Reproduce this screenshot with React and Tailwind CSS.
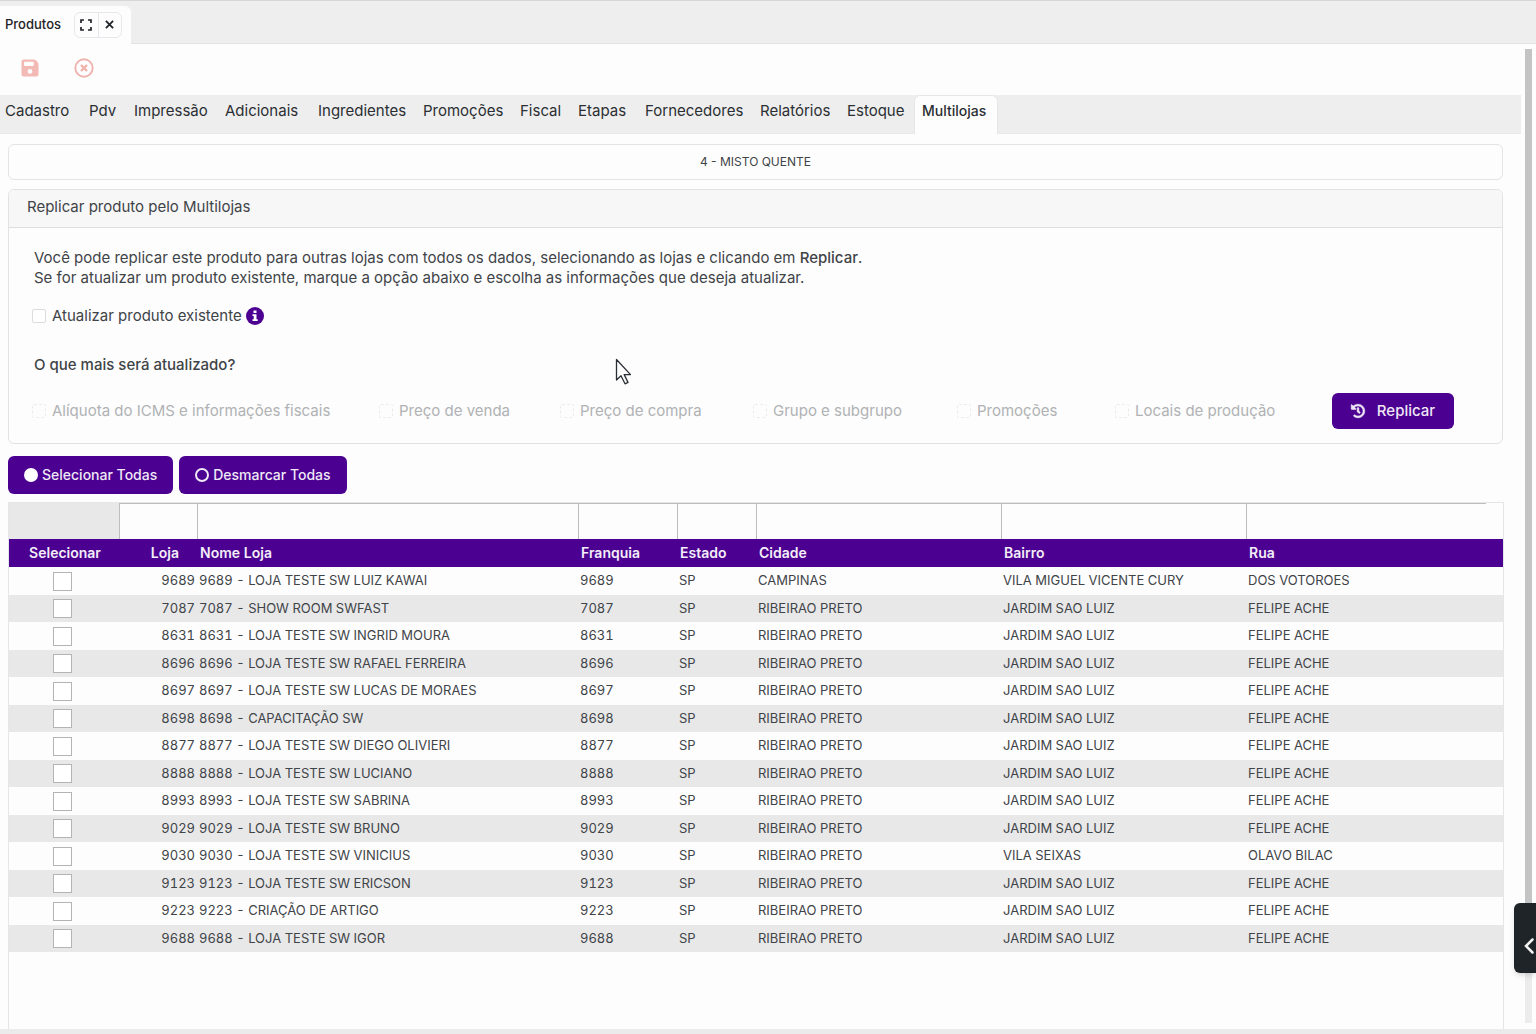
import { FaHistory } from "react-icons/fa";

const tabs = [
  "Cadastro", "Pdv", "Impressão", "Adicionais", "Ingredientes", "Promoções",
  "Fiscal", "Etapas", "Fornecedores", "Relatórios", "Estoque", "Multilojas",
];

const updateOptions = [
  "Alíquota do ICMS e informações fiscais",
  "Preço de venda",
  "Preço de compra",
  "Grupo e subgrupo",
  "Promoções",
  "Locais de produção",
];

const columns = ["Nome Loja", "Franquia", "Estado", "Cidade", "Bairro", "Rua"];

const RP = ["RIBEIRAO PRETO", "JARDIM SAO LUIZ", "FELIPE ACHE"];

const stores = [
  ["9689", "LOJA TESTE SW LUIZ KAWAI", "CAMPINAS", "VILA MIGUEL VICENTE CURY", "DOS VOTOROES"],
  ["7087", "SHOW ROOM SWFAST", ...RP],
  ["8631", "LOJA TESTE SW INGRID MOURA", ...RP],
  ["8696", "LOJA TESTE SW RAFAEL FERREIRA", ...RP],
  ["8697", "LOJA TESTE SW LUCAS DE MORAES", ...RP],
  ["8698", "CAPACITAÇÃO SW", ...RP],
  ["8877", "LOJA TESTE SW DIEGO OLIVIERI", ...RP],
  ["8888", "LOJA TESTE SW LUCIANO", ...RP],
  ["8993", "LOJA TESTE SW SABRINA", ...RP],
  ["9029", "LOJA TESTE SW BRUNO", ...RP],
  ["9030", "LOJA TESTE SW VINICIUS", "RIBEIRAO PRETO", "VILA SEIXAS", "OLAVO BILAC"],
  ["9123", "LOJA TESTE SW ERICSON", ...RP],
  ["9223", "CRIAÇÃO DE ARTIGO", ...RP],
  ["9688", "LOJA TESTE SW IGOR", ...RP],
];

function WindowBar() {
  return (
    <header className="flex h-11 items-end border-t border-[#d6d6d6] bg-[#eeeeee]">
      <div className="flex h-full w-full items-end border-b border-[#e4e4e4]">
        <div className="-mb-px flex h-[38px] w-[131px] items-center justify-between rounded-tr-md bg-[#fdfdfd] pr-[9px] pb-px pl-[5px]">
          <span className="text-[13px] font-medium text-[#1f2226]">Produtos</span>
          <div className="flex h-[26px] w-12 rounded-md border border-[#e6e8eb]">
            <button aria-label="Expandir" className="flex flex-1 items-center justify-center border-r border-[#e6e8eb]">
              <svg viewBox="0 0 12 12" className="size-3" fill="none" stroke="#1f2226" strokeWidth="1.700">
                <path d="M1 4V1h3M8 1h3v3M11 8v3H8M4 11H1V8" />
              </svg>
            </button>
            <button aria-label="Fechar" className="flex flex-1 items-center justify-center">
              <svg viewBox="0 0 10 10" className="size-[9px]" fill="none" stroke="#1f2226" strokeWidth="2">
                <path d="M1 1l8 8M9 1l-8 8" />
              </svg>
            </button>
          </div>
        </div>
      </div>
    </header>
  );
}

function Toolbar() {
  return (
    <div className="flex h-[51px] items-center gap-[34px] pb-[3px] pl-5">
      <button aria-label="Salvar" className="flex size-5 items-center justify-center">
        <svg viewBox="0 0 18 18" className="size-[18px]">
          <path
            fill="#f3b9b5"
            fillRule="evenodd"
            d="M2.5 0.5H13.200a2 2 0 0 1 1.400 .6l2.300 2.300a2 2 0 0 1 .6 1.400V15.500a2 2 0 0 1-2 2h-13a2 2 0 0 1-2-2v-13a2 2 0 0 1 2-2ZM4 2.700a1 1 0 0 0-1 1V6a1 1 0 0 0 1 1h7.800a1 1 0 0 0 1-1V3.700a1 1 0 0 0-1-1ZM9 10a2.400 2.400 0 1 0 0 4.800 2.400 2.400 0 0 0 0-4.800Z"
          />
        </svg>
      </button>
      <button aria-label="Cancelar" className="flex size-5 items-center justify-center">
        <svg viewBox="0 0 20 20" className="size-5" fill="none" stroke="#f0b2ad">
          <circle cx="10" cy="10" r="8.700" strokeWidth="1.900" />
          <path strokeWidth="2.400" d="M7 7l6 6M13 7l-6 6" />
        </svg>
      </button>
    </div>
  );
}

function Tabs() {
  return (
    <nav className="grid h-[39px] grid-cols-[84px_45px_91px_93px_105px_97px_58px_67px_115px_87px_72px_84px] border-b border-[#e9e9e9] bg-[#eeeeee] text-[15px] text-[#2b2f33]">
      {tabs.map((tab) => (
        <a
          key={tab}
          href="#"
          aria-current={tab === "Multilojas" ? "page" : undefined}
          className="-mb-px pt-1 pl-[5px] whitespace-nowrap leading-6 aria-[current=page]:rounded-t-md aria-[current=page]:border aria-[current=page]:border-b-0 aria-[current=page]:border-[#e6e6e6] aria-[current=page]:bg-[#fdfdfd] aria-[current=page]:pt-[3px] aria-[current=page]:pl-[7px] aria-[current=page]:text-sm aria-[current=page]:leading-6 aria-[current=page]:font-medium"
        >
          {tab}
        </a>
      ))}
    </nav>
  );
}

function ReplicateCard() {
  return (
    <section className="mr-px rounded-md border border-[#e2e2e2]">
      <h2 className="h-[38px] rounded-t-md border-b border-[#dedede] bg-[#f7f7f7] pl-[18px] text-[15px] leading-[34px]">
        Replicar produto pelo Multilojas
      </h2>
      <div className="pt-5 pr-12 pb-3.5 pl-[23px]">
        <p className="pl-0.5 text-[15px] leading-5">
          Você pode replicar este produto para outras lojas com todos os dados, selecionando as lojas e clicando em{" "}
          <strong className="font-medium">Replicar</strong>.
          <br />
          Se for atualizar um produto existente, marque a opção abaixo e escolha as informações que deseja atualizar.
        </p>
        <div className="mt-4 flex h-6 items-center gap-1">
          <label className="flex items-center gap-1.5 text-[15px]">
            <input type="checkbox" className="size-3.5 appearance-none rounded-xs border border-[#dcdcdc] bg-white" />
            Atualizar produto existente
          </label>
          <svg viewBox="0 0 18 18" className="size-[18px]" role="img" aria-label="Informação">
            <circle cx="9" cy="9" r="9" fill="#4b0091" />
            <path fill="#fff" d="M7.500 3.500h3v2.400h-3ZM6.500 7.200h4v5h1.200V14H6.500v-1.800h1.200V9H6.500Z" />
          </svg>
        </div>
        <p className="mt-[25px] pl-0.5 text-[15px] leading-6 font-medium">O que mais será atualizado?</p>
        <div className="mt-4 grid grid-cols-[347fr_181fr_193fr_204fr_158fr_217fr_122fr] items-center">
          {updateOptions.map((option) => (
            <label key={option} className="flex items-center gap-1.5 text-[15px] whitespace-nowrap text-[#b0b2b4]">
              <input type="checkbox" disabled className="size-3.5 appearance-none rounded-xs border border-dashed border-[#ececec]" />
              {option}
            </label>
          ))}
          <button className="flex h-9 items-center justify-center gap-3 rounded-md bg-[#4b0091] text-[15px] font-medium text-[#efe8f6]">
            <FaHistory className="size-3.5 overflow-visible" stroke="currentColor" strokeWidth="20" />
            Replicar
          </button>
        </div>
      </div>
    </section>
  );
}

function StoreTable() {
  return (
    <div className="flex-1 border border-[#e4e6e9] border-b-0">
      <table className="w-full table-fixed border-collapse text-[13px] tabular-nums">
        <colgroup>
          <col className="w-[110px]" />
          <col className="w-[78px]" />
          <col className="w-[381px]" />
          <col className="w-[99px]" />
          <col className="w-[79px]" />
          <col className="w-[245px]" />
          <col className="w-[245px]" />
          <col />
        </colgroup>
        <thead>
          <tr className="h-9">
            <td className="bg-[#e8e8e8] p-0" />
            {["Loja", ...columns].map((name) => (
              <td key={name} className="p-0 last:pr-[17px]">
                <input
                  type="text"
                  aria-label={"Filtrar " + name}
                  className="block h-9 w-full border-t border-l border-[#bdbdbd] bg-[#fdfdfd] px-1"
                />
              </td>
            ))}
          </tr>
          <tr className="h-7 bg-[#4b0091] text-left text-sm text-[#f3eef8]">
            <th className="p-0 pl-0.5 text-center font-semibold">Selecionar</th>
            <th className="p-0 pr-[18px] text-right font-semibold">Loja</th>
            {columns.map((name) => (
              <th key={name} className="p-0 pl-[3px] font-semibold">{name}</th>
            ))}
          </tr>
        </thead>
        <tbody>
          {stores.map(([id, name, city, district, street]) => (
            <tr key={id} className="odd:h-7 even:h-[27px] even:bg-[#e8e8e8]">
              <td className="p-0 pr-1">
                <input
                  type="checkbox"
                  aria-label={"Selecionar loja " + id}
                  className="mx-auto block size-[19px] appearance-none border border-[#b4b4b4] bg-white"
                />
              </td>
              <td className="p-0 pr-0.5 text-right">{id}</td>
              <td className="p-0 pl-0.5">{id} - {name}</td>
              <td className="p-0 pl-0.5">{id}</td>
              <td className="p-0 pl-0.5">SP</td>
              <td className="p-0 pl-0.5">{city}</td>
              <td className="p-0 pl-0.5">{district}</td>
              <td className="p-0 pl-0.5">{street}</td>
            </tr>
          ))}
        </tbody>
      </table>
    </div>
  );
}

export default function App() {
  return (
    <div className="relative flex min-h-screen flex-col bg-[#fdfdfd] font-['Inter','Liberation_Sans',sans-serif] text-[#3f4448]">
      <WindowBar />
      <div className="flex flex-1">
        <main className="flex min-w-0 flex-1 flex-col">
          <Toolbar />
          <Tabs />
          <div className="flex flex-1 flex-col pr-[17px] pl-2">
            <div className="mt-2.5 mr-px h-9 rounded-md border border-[#e4e4e4] text-center text-xs leading-[34px]">
              4 - MISTO QUENTE
            </div>
            <div className="mt-[9px]">
              <ReplicateCard />
            </div>
            <div className="mt-3 mb-2 flex gap-1.5">
              <button className="flex h-[38px] items-center gap-1 rounded-md bg-[#4b0091] px-4 text-sm font-medium text-[#efe8f6]">
                <span className="size-3.5 rounded-full bg-white" />
                Selecionar Todas
              </button>
              <button className="flex h-[38px] items-center gap-1 rounded-md bg-[#4b0091] px-4 text-sm font-medium text-[#efe8f6]">
                <span className="size-3.5 rounded-full border-2 border-[#efe8f6]" />
                Desmarcar Todas
              </button>
            </div>
            <StoreTable />
          </div>
        </main>
        <div className="flex w-[15px] flex-col pt-[5px] pb-1.5 pl-1">
          <div className="w-[7px] flex-1 bg-[#c4c4c4]" />
          <div className="h-[90px] w-[7px] bg-[#ececec]" />
        </div>
      </div>
      <footer className="h-[5px] bg-[#ebebeb]" />

      <button aria-label="Abrir painel" className="absolute right-0 bottom-[61px] flex h-[70px] w-[22px] items-center justify-end rounded-l-md bg-[#1f2428] pt-4 pr-0.5 shadow-md">
        <svg viewBox="0 0 10 16" className="h-4 w-2.5" fill="none" stroke="#f2f2f2" strokeWidth="2.500" strokeLinecap="round">
          <path d="M8.500 1.500L2 8l6.500 6.500" />
        </svg>
      </button>

      <svg viewBox="0 0 17 27" className="pointer-events-none absolute top-[358px] left-[615px] h-[27px] w-[17px]">
        <path fill="#fdfdfd" stroke="#2b2f36" strokeWidth="1.300" strokeLinejoin="round" d="M1.500 1.500v20.500l4.500-4.200 4 8 3-1.400-3.800-7.800h6.300Z" />
      </svg>
    </div>
  );
}
